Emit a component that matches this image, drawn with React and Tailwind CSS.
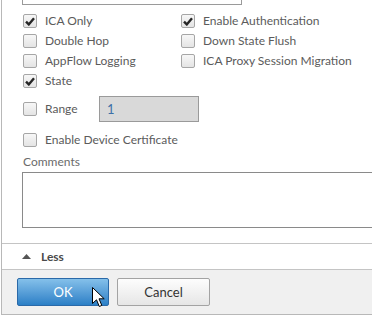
import React from 'react';

// Small Windows-style checkbox
function Box({ checked }) {
  return (
    <span className="inline-flex items-center justify-center w-[14px] h-[14px] shrink-0 rounded-[2px] border border-[#a6a6a6] bg-gradient-to-b from-[#f7f7f7] to-[#e4e4e4]">
      {checked && (
        <svg width="10" height="9" viewBox="0 0 10 9">
          <path d="M1 4.6 L3.8 7.4 L9 1.2" fill="none" stroke="#262626" strokeWidth="2.4" />
        </svg>
      )}
    </span>
  );
}

function Check({ label, checked }) {
  return (
    <div className="flex items-center h-[20px] gap-[8px]">
      <Box checked={checked} />
      <span className="text-[#5b5b5b] whitespace-nowrap">{label}</span>
    </div>
  );
}

export default function App() {
  return (
    <div className="w-[372px] h-[316px] bg-white overflow-hidden relative font-['Lato',sans-serif] text-[12px] leading-none">
      <div className="ml-px h-[315px] border-l border-b border-[#b8b8b8] flex flex-col">
        {/* bottom of the field above */}
        <div className="ml-[20px] w-[220px] h-[5px] border-x border-b border-[#9a9a9a]" />

        {/* option grid */}
        <div className="mt-[6px] pl-[21px] grid grid-cols-[158px_auto]">
          <Check label="ICA Only" checked />
          <Check label="Enable Authentication" checked />
          <Check label="Double Hop" />
          <Check label="Down State Flush" />
          <Check label="AppFlow Logging" />
          <Check label="ICA Proxy Session Migration" />
          <Check label="State" checked />
        </div>

        {/* range */}
        <div className="mt-[5px] pl-[21px] flex items-center h-[26px]">
          <Box />
          <span className="ml-[8px] w-[54px] text-[#5b5b5b]">Range</span>
          <div className="w-[100px] h-[26px] border border-[#9a9a9a] bg-[#d9d9d9] flex items-center pl-[7px] text-[#3c6fa8] text-[13px]">
            1
          </div>
        </div>

        <div className="mt-[8px] pl-[21px]">
          <Check label="Enable Device Certificate" />
        </div>

        <div className="mt-[6px] pl-[21px] h-[12px] text-[#6b6b6b]">Comments</div>
        <div className="mt-[4px] ml-[20px] h-[56px] w-[360px] border border-[#8a8a8a]" />

        {/* less toggle */}
        <div className="mt-[15px] border-t border-[#c4c4c4] h-[26px] flex items-center pl-[20px] gap-[10px]">
          <svg width="9" height="5" viewBox="0 0 9 5">
            <path d="M0 5 L4.5 0 L9 5 Z" fill="#555" />
          </svg>
          <span className="text-[#4a4a4a] font-bold">Less</span>
        </div>

        {/* footer */}
        <div className="flex-1 border-t border-[#c4c4c4] bg-[#f0f0f0] flex items-center pl-[15px] gap-[8px]">
          <button className="w-[92px] h-[28px] rounded-[2px] border border-[#2a69a8] bg-gradient-to-b from-[#84c0ea] to-[#2a7fc6] text-white text-[13px]">
            OK
          </button>
          <button className="w-[93px] h-[28px] rounded-[2px] border border-[#a3a3a3] bg-gradient-to-b from-[#fdfdfd] to-[#e6e6e6] text-[#333] text-[13px]">
            Cancel
          </button>
        </div>
      </div>

      {/* mouse pointer */}
      <svg className="absolute left-[92px] top-[287px]" width="14" height="21" viewBox="0 0 14 21">
        <path d="M0.5 0.5 L0.5 16.5 L4.5 12.8 L7.3 19.5 L9.8 18.4 L7 11.8 L12.2 11.8 Z" fill="#fff" stroke="#000" strokeWidth="1" strokeLinejoin="round" />
      </svg>
    </div>
  );
}
